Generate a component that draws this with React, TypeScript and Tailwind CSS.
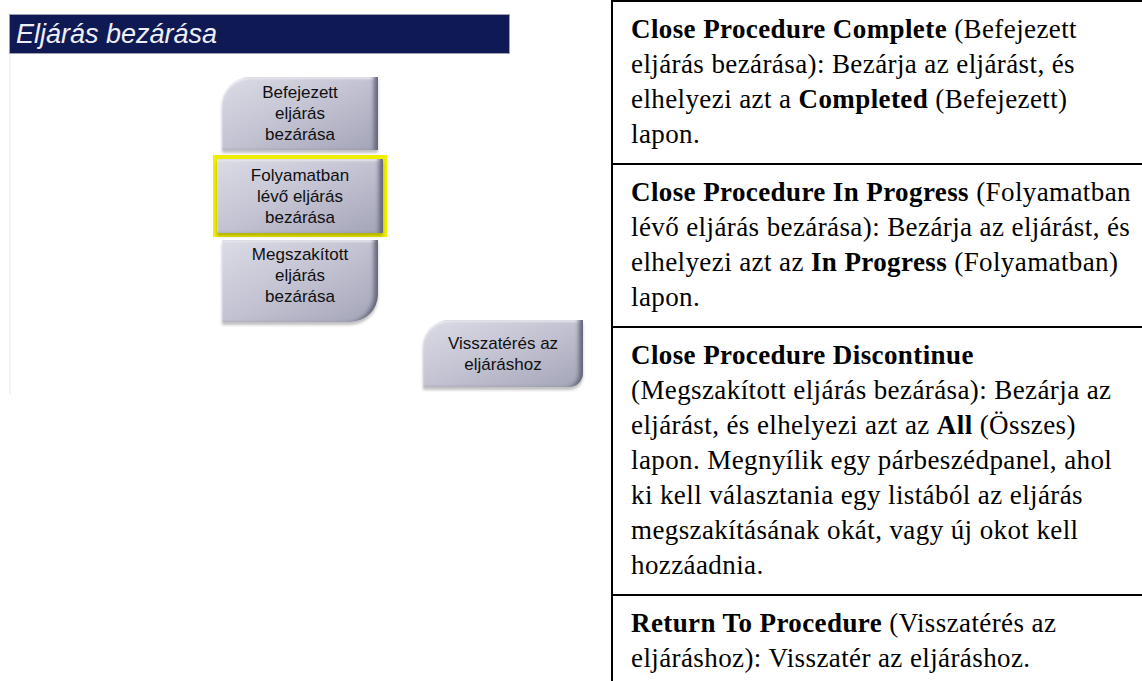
import React from 'react';

const buttonFace =
  'flex flex-col items-center justify-center bg-gradient-to-br from-[#dcdce6] via-[#c2c2d2] to-[#a4a4b8] text-center text-[17px] leading-[21px] text-[#101010] shadow-[inset_-6px_0_4px_-2px_#66667a,inset_0_2px_2px_#f0f0f6,0_3px_3px_rgba(0,0,0,0.25)]';

function ProcButton({ lines, className }: { lines: string[]; className: string }) {
  return (
    <div className={`${buttonFace} ${className}`}>
      {lines.map((l) => (
        <span key={l}>{l}</span>
      ))}
    </div>
  );
}

function ProcedurePanel() {
  return (
    <div className="w-[611px] shrink-0 pt-[14px] pl-[9px] font-['Liberation_Sans',Arial,sans-serif]">
      <div className="h-[40px] w-[501px] border border-[#a0a0ac] bg-[#0f1a54] pl-[6px]">
        <span className="text-[27px] italic leading-[39px] text-[#eeeef6]">Eljárás bezárása</span>
      </div>
      <div className="h-[340px] border-l-2 border-[#f4f4f4] pt-[23px] pl-[211px]">
        <div className="flex w-[156px] flex-col">
          <ProcButton lines={['Befejezett', 'eljárás', 'bezárása']} className="h-[73px] rounded-tl-[28px]" />
          <div className="-mx-[9px] mt-[5px] h-[82px] border-[4px] border-[#f0ee00]">
            <ProcButton lines={['Folyamatban', 'lévő eljárás', 'bezárása']} className="h-full" />
          </div>
          <ProcButton
            lines={['Megszakított', 'eljárás', 'bezárása']}
            className="mt-[3px] h-[82px] rounded-br-[28px] pb-[12px]"
          />
        </div>
        <ProcButton
          lines={['Visszatérés az', 'eljáráshoz']}
          className="-mt-[2px] ml-[201px] h-[67px] w-[160px] rounded-tl-[26px] rounded-br-[14px]"
        />
      </div>
    </div>
  );
}

function Row({ children, last }: { children: React.ReactNode; last?: boolean }) {
  return (
    <div className={`whitespace-nowrap pt-[10px] pr-[4px] pb-[11px] pl-[18px] ${last ? '' : 'border-b-2 border-black'}`}>
      {children}
    </div>
  );
}

function DescriptionTable() {
  return (
    <div className="flex-1 border-t-2 border-l-2 border-black font-['Liberation_Serif',serif] text-[27px] leading-[35px] tracking-[0.4px] text-black">
      <Row>
        <b>Close Procedure Complete</b> (Befejezett
        <br />
        eljárás bezárása): Bezárja az eljárást, és
        <br />
        elhelyezi azt a <b>Completed</b> (Befejezett)
        <br />
        lapon.
      </Row>
      <Row>
        <b>Close Procedure In Progress</b> (Folyamatban
        <br />
        lévő eljárás bezárása): Bezárja az eljárást, és
        <br />
        elhelyezi azt az <b>In Progress</b> (Folyamatban)
        <br />
        lapon.
      </Row>
      <Row>
        <b>Close Procedure Discontinue</b>
        <br />
        (Megszakított eljárás bezárása): Bezárja az
        <br />
        eljárást, és elhelyezi azt az <b>All</b> (Összes)
        <br />
        lapon. Megnyílik egy párbeszédpanel, ahol
        <br />
        ki kell választania egy listából az eljárás
        <br />
        megszakításának okát, vagy új okot kell
        <br />
        hozzáadnia.
      </Row>
      <Row last>
        <b>Return To Procedure</b> (Visszatérés az
        <br />
        eljáráshoz): Visszatér az eljáráshoz.
      </Row>
    </div>
  );
}

export default function App() {
  return (
    <div className="flex h-[681px] w-[1142px] overflow-hidden bg-white">
      <ProcedurePanel />
      <DescriptionTable />
    </div>
  );
}
